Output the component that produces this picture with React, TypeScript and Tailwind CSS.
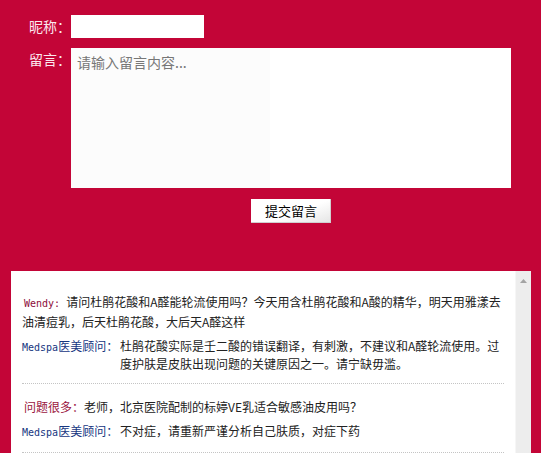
const messages = [
  {
    name: 'Wendy:',
    latin: true,
    question: '请问杜鹃花酸和A醛能轮流使用吗？今天用含杜鹃花酸和A酸的精华，明天用雅漾去油清痘乳，后天杜鹃花酸，大后天A醛这样',
    answer: '杜鹃花酸实际是壬二酸的错误翻译，有刺激，不建议和A醛轮流使用。过度护肤是皮肤出现问题的关键原因之一。请宁缺毋滥。',
  },
  {
    name: '问题很多：',
    latin: false,
    question: '老师，北京医院配制的标婷VE乳适合敏感油皮用吗？',
    answer: '不对症，请重新严谨分析自己肤质，对症下药',
  },
];

function MessageItem({ item }: { item: (typeof messages)[number] }) {
  return (
    <li className="pt-[14px] pb-[10px] border-b border-dotted border-[#c4c4c4]">
      <p className="text-[12px] leading-[18px] text-[#222]">
        {item.latin ? (
          <span className="ml-[2px] mr-[6px] text-[10px] text-[#8c0d3a] font-['DejaVu_Sans_Mono',monospace]">
            {item.name}
          </span>
        ) : (
          <span className="ml-[2px] text-[#9a1440]">{item.name}</span>
        )}
        {item.question}
      </p>
      <div className="mt-[6px] flex text-[12px] leading-[18px]">
        <span className="w-[98px] shrink-0 text-[#16367f]">
          <span className="text-[10px] font-['DejaVu_Sans_Mono',monospace]">Medspa</span>
          医美顾问：
        </span>
        <p className="flex-1 text-[#222]">{item.answer}</p>
      </div>
    </li>
  );
}

export default function App() {
  return (
    <div className="h-[453px] overflow-hidden bg-[#c30537] font-['Noto_Sans_CJK_SC','Noto_Sans',sans-serif]">
      <form className="pt-[15px]" onSubmit={(e) => e.preventDefault()}>
        <div className="flex items-center">
          <label className="w-[71px] text-right text-[14px] leading-[23px] text-[#fce8f0]">昵称：</label>
          <input type="text" className="w-[133px] h-[23px] bg-white outline-none px-1 text-[12px]" />
        </div>

        <div className="mt-[10px] flex items-start">
          <label className="w-[71px] text-right text-[14px] leading-[22px] text-[#fce8f0]">留言：</label>
          <textarea
            placeholder="请输入留言内容..."
            className="w-[440px] h-[140px] resize-none outline-none px-[6px] py-[5px] text-[14px] leading-[18px] text-[#555] placeholder:text-[#777] bg-[linear-gradient(90deg,#fcfcfc_0,#fcfcfc_199px,#ffffff_199px)]"
          />
        </div>

        <div className="mt-[9px] pl-[251px]">
          <button
            type="submit"
            className="w-[80px] h-[24px] text-[13px] text-black bg-[linear-gradient(160deg,#ffffff_55%,#e4e4e4_100%)] shadow-[inset_-1px_-1px_0_#d0d0d0]"
          >
            提交留言
          </button>
        </div>
      </form>

      <div className="mt-[48px] ml-[11px] w-[520px] h-[220px] bg-white flex">
        <ul className="flex-1 pt-[8px] pl-[11px] pr-[11px]">
          {messages.map((m, i) => (
            <MessageItem key={i} item={m} />
          ))}
        </ul>
        <div className="w-[16px] bg-[#ededed] border-l border-[#f6f6f6] flex justify-center pt-[8px]">
          <svg width="7" height="4" viewBox="0 0 7 4">
            <path d="M3.5 0 L7 4 L0 4 Z" fill="#a3a3a3" />
          </svg>
        </div>
      </div>
    </div>
  );
}
